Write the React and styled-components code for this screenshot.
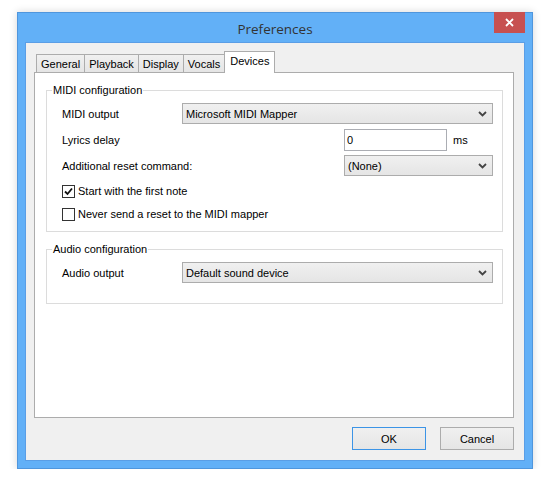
import styled, { createGlobalStyle } from "styled-components";

const GlobalStyle = createGlobalStyle`
  body {
    margin: 0;
    background: #ffffff;
    font-family: Tahoma, "Liberation Sans", Arial, sans-serif;
    font-size: 11px;
    color: #000;
  }
`;

const Window = styled.div`
  margin: 12px 0 0 17px;
  width: 516px;
  height: 457px;
  box-sizing: border-box;
  background: #62b0f7;
  border: 1px solid #4f96dd;
  box-shadow: 0 0 8px rgba(0, 0, 0, 0.16);
  padding: 0 7px 7px;
  display: flex;
  flex-direction: column;
`;

const TitleBar = styled.div`
  height: 29px;
  display: grid;
  grid-template-columns: 1fr auto 1fr;
  align-items: center;
`;

const Title = styled.div`
  grid-column: 2;
  font-family: "Segoe UI", "Open Sans", sans-serif;
  font-size: 13.5px;
  color: #333;
  padding-top: 2px;
`;

const CloseButton = styled.div`
  grid-column: 3;
  justify-self: end;
  align-self: start;
  margin-top: -1px;
  width: 31px;
  height: 21px;
  background: #c75050;
  display: flex;
  align-items: center;
  justify-content: center;
`;

const Client = styled.div`
  flex: 1;
  box-sizing: border-box;
  background: #f0f0f0;
  border: 1px solid #5a9ee6;
  padding: 8px 10px 0 8px;
`;

const TabStrip = styled.div`
  display: flex;
  align-items: flex-end;
  padding-left: 2px;
  height: 22px;
  margin-bottom: -1px;
  position: relative;
  z-index: 1;
`;

const Tab = styled.div`
  box-sizing: border-box;
  height: ${(p) => (p.$active ? "22px" : "18px")};
  margin-bottom: ${(p) => (p.$active ? "0" : "1px")};
  margin-left: -1px;
  padding: ${(p) => (p.$active ? "2px 5px 0" : "1px 4px 0")};
  border: 1px solid #acacac;
  border-bottom: none;
  background: ${(p) =>
    p.$active ? "#ffffff" : "linear-gradient(#f0f0f0, #e5e5e5)"};
  display: flex;
  align-items: ${(p) => (p.$active ? "flex-start" : "center")};
  line-height: 14px;

  &:first-child {
    margin-left: 0;
  }
`;

const Panel = styled.div`
  width: 480px;
  height: 346px;
  box-sizing: border-box;
  background: #ffffff;
  border: 1px solid #acacac;
  padding: 11px 10px 0 11px;
`;

const Group = styled.fieldset`
  margin: ${(p) => (p.$spaced ? "11px 0 0" : "0")};
  padding: 0;
  min-width: 0;
  border: 1px solid #dcdcdc;
`;

const Legend = styled.legend`
  margin-left: 5px;
  padding: 0 1px;
  line-height: 13px;
  font-size: 11px;
`;

const GroupBody = styled.div`
  padding: 6px 10px ${(p) => p.$bottom || "10px"} 15px;
`;

const FormGrid = styled.div`
  display: grid;
  grid-template-columns: ${(p) => p.$cols};
  grid-auto-rows: 21px;
  row-gap: 5px;
  align-items: center;
`;

const Label = styled.div`
  grid-column: ${(p) => p.$span || "auto"};
  white-space: nowrap;
`;

const Combo = styled.div`
  grid-column: ${(p) => p.$span || "auto"};
  height: 21px;
  box-sizing: border-box;
  border: 1px solid #acacac;
  background: linear-gradient(#f0f0f0, #e5e5e5);
  padding: 0 5px 0 3px;
  display: flex;
  align-items: center;
  justify-content: space-between;
`;

const InputCell = styled.div`
  display: flex;
  align-items: center;
  gap: 6px;
  height: 22px;
`;

const TextBox = styled.input`
  width: 103px;
  height: 22px;
  box-sizing: border-box;
  border: 1px solid #abadb3;
  padding: 0 2px;
  margin: 0;
  font: inherit;
  outline: none;
`;

const CheckList = styled.div`
  margin-top: 9px;
  display: flex;
  flex-direction: column;
  gap: 10px;
`;

const CheckRow = styled.label`
  display: flex;
  align-items: center;
  gap: 3px;
  height: 13px;
  line-height: 13px;
`;

const Box = styled.span`
  width: 13px;
  height: 13px;
  box-sizing: border-box;
  border: 1px solid #333;
  background: #fff;
  display: flex;
  align-items: center;
  justify-content: center;
`;

const ButtonRow = styled.div`
  display: flex;
  justify-content: flex-end;
  gap: 14px;
  margin-top: 9px;
`;

const Button = styled.div`
  width: 74px;
  height: 23px;
  box-sizing: border-box;
  border: 1px solid ${(p) => (p.$default ? "#3c94e6" : "#acacac")};
  background: linear-gradient(#f0f0f0, #e5e5e5);
  display: flex;
  align-items: center;
  justify-content: center;
`;

const Chevron = () => (
  <svg width="9" height="6" viewBox="0 0 9 6">
    <path d="M1 1 L4.5 4.5 L8 1" fill="none" stroke="#444" strokeWidth="1.8" />
  </svg>
);

const Check = ({ checked, children }) => (
  <CheckRow>
    <Box>
      {checked && (
        <svg width="9" height="9" viewBox="0 0 9 9">
          <path d="M1 4.5 L3.5 7 L8 1.5" fill="none" stroke="#111" strokeWidth="1.8" />
        </svg>
      )}
    </Box>
    {children}
  </CheckRow>
);

const tabs = ["General", "Playback", "Display", "Vocals", "Devices"];

export default function App() {
  return (
    <>
      <GlobalStyle />
      <Window>
        <TitleBar>
          <Title>Preferences</Title>
          <CloseButton>
            <svg width="9" height="9" viewBox="0 0 9 9">
              <path d="M1 1 L8 8 M8 1 L1 8" stroke="#fff" strokeWidth="1.8" />
            </svg>
          </CloseButton>
        </TitleBar>
        <Client>
          <TabStrip>
            {tabs.map((t) => (
              <Tab key={t} $active={t === "Devices"}>
                {t}
              </Tab>
            ))}
          </TabStrip>
          <Panel>
            <Group>
              <Legend>MIDI configuration</Legend>
              <GroupBody>
                <FormGrid $cols="120px 162px 149px">
                  <Label>MIDI output</Label>
                  <Combo $span="span 2">
                    Microsoft MIDI Mapper
                    <Chevron />
                  </Combo>
                  <Label $span="span 2">Lyrics delay</Label>
                  <InputCell>
                    <TextBox defaultValue="0" />
                    ms
                  </InputCell>
                  <Label $span="span 2">Additional reset command:</Label>
                  <Combo>
                    (None)
                    <Chevron />
                  </Combo>
                </FormGrid>
                <CheckList>
                  <Check checked>Start with the first note</Check>
                  <Check>Never send a reset to the MIDI mapper</Check>
                </CheckList>
              </GroupBody>
            </Group>
            <Group $spaced>
              <Legend>Audio configuration</Legend>
              <GroupBody $bottom="20px">
                <FormGrid $cols="120px 311px">
                  <Label>Audio output</Label>
                  <Combo>
                    Default sound device
                    <Chevron />
                  </Combo>
                </FormGrid>
              </GroupBody>
            </Group>
          </Panel>
          <ButtonRow>
            <Button $default>OK</Button>
            <Button>Cancel</Button>
          </ButtonRow>
        </Client>
      </Window>
    </>
  );
}
